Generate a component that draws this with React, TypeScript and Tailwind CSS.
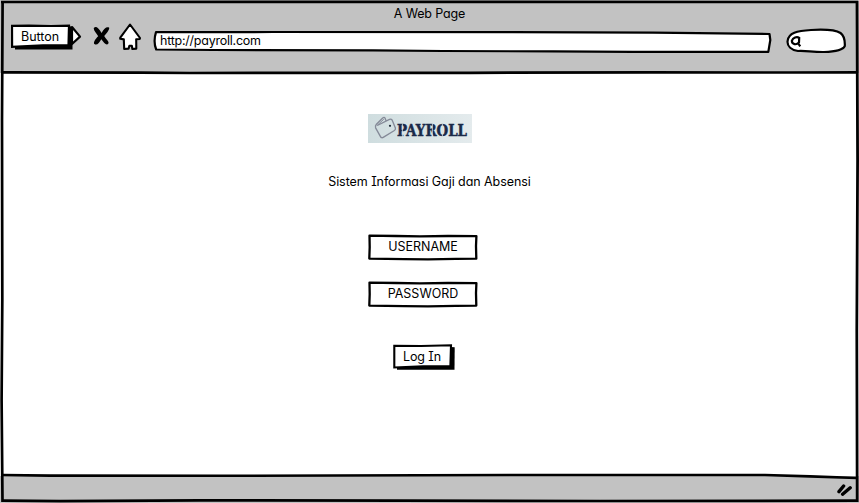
import type { ReactNode } from "react";

const hand =
  "font-[Inter,'Liberation_Sans',sans-serif] [font-feature-settings:'cv11','cv08'] text-[12.5px] font-[425] leading-[18px] text-black whitespace-nowrap";

function Label({ children, className = "" }: { children: ReactNode; className?: string }) {
  return <span className={`relative ${hand} ${className}`}>{children}</span>;
}

/** Uneven pen outline around the browser window and its two rules. */
function WindowInk() {
  return (
    <svg className="pointer-events-none absolute inset-0" width="859" height="503" fill="none" stroke="#000">
      <path d="M1 2 L430 1.9 L858 2" strokeWidth="2.7" />
      <path d="M2.6 1 L2 120 L2.3 300 L1.6 400 L2.5 502" strokeWidth="2.7" />
      <path d="M857 1 L857.6 160 L856.8 330 L857.2 502" strokeWidth="2.8" />
      <path d="M2 72.4 L140 72.6 L190 73 L470 72.8 L650 72.4 L790 72.5 L857 72.3" strokeWidth="2.7" />
      <path d="M2 475 L50 475.6 L220 475.8 L420 475.2 L560 475 L765 475 L810 476.4 L857 478" strokeWidth="2.6" />
      <path d="M2 500.6 L60 501.2 L200 500.3 L400 500.7 L600 501 L857 500.7" strokeWidth="2.7" />
    </svg>
  );
}

function BackForward() {
  return (
    <div className="relative flex h-[26px] w-[72px]">
      <svg className="absolute inset-0" width="72" height="27" viewBox="0 0 72 27">
        <path d="M61 3 L69 12.6 L61 20 Z" fill="#fff" stroke="#000" strokeWidth="2.2" strokeLinejoin="round" />
        <path d="M4 21 L58 1.5 L61.5 3.4 L61.5 25.5 L4 25.5Z" fill="#000" />
        <path d="M1 1.8 L18 1.6 L40 2 L58 1.6 L57.5 21.4 L32 21.4 L1.1 22.8 Z" fill="#fff" stroke="#000" strokeWidth="2.2" />
      </svg>
      <Label className="ml-[10px] mt-1">Button</Label>
    </div>
  );
}

function CloseIcon() {
  return (
    <svg width="17" height="21" viewBox="0 0 17 21" fill="#000">
      <path d="M.8 2 C2.8 0 5.1 1.2 8.6 7 C11 2 13.8 .4 16 1.5 C17.2 3 13.2 8 11.2 10 C12.8 13 16.2 15.4 15.5 17.2 C13.8 20 11.4 17.6 8.3 13.3 C6.2 17 4 19.8 1.4 18.1 C-.3 16.4 3.4 11.8 5.2 10.2 C3.2 6.8 .4 4.2 .8 2Z" />
    </svg>
  );
}

function HomeIcon() {
  return (
    <svg width="23" height="28" viewBox="0 0 23 28" fill="#fff" stroke="#000" strokeWidth="2.1" strokeLinejoin="round">
      <path d="M11 1.5 L21 15 L20.7 16 L17.2 16.2 L17.3 25.6 L13.4 26 L12.8 22.8 L10.4 22.7 L9.6 25.6 L5.2 26 L4.8 16.4 L1.2 15.8 L1.3 14.6 Z" />
    </svg>
  );
}

function AddressBar() {
  return (
    <div className="relative flex h-6 w-[620px]">
      <svg className="absolute inset-0" width="620" height="24" viewBox="0 0 620 24">
        <path
          d="M3 2.2 L120 2 L360 2.2 L500 2.7 L616.5 4 L617.3 10 L615.3 21.9 L480 21.8 L400 21.4 L290 21 L220 20.4 L60 20 L3.2 19.5 C1 14 1.2 8 3 2.2Z"
          fill="#fff" stroke="#000" strokeWidth="2.2" strokeLinejoin="round"
        />
      </svg>
      <Label className="ml-[7px] mt-[2px] tracking-[-0.24px]">http://payroll.com</Label>
    </div>
  );
}

function SearchBox() {
  return (
    <svg width="61" height="26" viewBox="0 0 61 26" fill="none" stroke="#000">
      <path d="M1.6 13 C2.4 5 11 2.8 25 2 C37 1.3 50 2.2 54.5 5 C58.5 8 59 14 58.8 18 C57 22 50 23.6 38 24 C27 24.2 19 22.4 12 23 C5 21.8 1 18 1.6 13Z" fill="#fff" strokeWidth="2.2" />
      <path d="M13.2 9.8 C10.8 8 7 9.6 5.8 12.8 C6 16.6 10.4 17.4 13 14.4 Z M12 15 L14.2 18.4" strokeWidth="2.2" />
    </svg>
  );
}

function Logo() {
  return (
    <div className="h-[29px] w-[104px] bg-linear-to-r from-[#cfdddf] to-[#e4ebed]">
      <svg className="overflow-visible" width="104" height="29" viewBox="0 0 104 29">
        <g fill="none" stroke="#858a98" strokeWidth="1.35" strokeLinejoin="round">
          <path d="M9.2 11.5 L21.5 5.3 Q23.2 4.7 24.2 6.2 L27.4 14 Q27.8 15.5 26.4 16.5 L15.2 23.4 Q13.5 24.4 12.5 22.6 L7.6 13.8 Q7 11.8 8.4 10.2 L14.7 4 Q16.2 2.8 17 4 L18 6.8" />
          <path d="M9.5 11 L15.8 5.2" strokeWidth="1" />
        </g>
        <circle cx="22" cy="11.8" r="1.1" fill="#1f2937" />
        <text
          x="29" y="22" textLength="70" lengthAdjust="spacingAndGlyphs" fill="#1b2a49" stroke="#1b2a49"
          className="stroke-[0.5px] text-[16px] font-bold font-['DejaVu_Serif',serif]"
        >
          PAYROLL
        </text>
        <path d="M34.4 9.5V23 M64.4 9.5V23 M74.4 9.5V23" stroke="#d8e3e5" strokeWidth=".8" />
      </svg>
    </div>
  );
}

function Field({ children, className }: { children: ReactNode; className: string }) {
  return (
    <div className={`relative flex h-[27px] w-[110px] justify-center ${className}`}>
      <svg className="absolute inset-0" width="110" height="27" viewBox="0 0 110 27">
        <path
          d="M1.5 1.6 L28 2 L52 2.3 L80 2 L108.4 2.2 L108 12 L108.3 24.6 L88 24.9 L60 25.3 L36 25.2 L1.3 24.6 L1.7 13Z"
          fill="#fff" stroke="#000" strokeWidth="2.3" strokeLinejoin="round"
        />
      </svg>
      {children}
    </div>
  );
}

function LoginButton() {
  return (
    <button className="relative ml-[393px] mt-[36px] flex h-[27px] w-[63px]">
      <svg className="absolute inset-0" width="63" height="27" viewBox="0 0 63 27">
        <path d="M4 22 L58 3 L61.7 3.3 L61.5 25.8 L4 25.7Z" fill="#000" />
        <path d="M1.3 1.7 L28 2 L58 1.3 L57.4 22 L30 22.3 L1.3 23.5 Z" fill="#fff" stroke="#000" strokeWidth="2.1" />
      </svg>
      <Label className="ml-[10px] mt-[4px] tracking-[-0.1px]">Log In</Label>
    </button>
  );
}

export default function App() {
  return (
    <div className="relative flex h-[503px] w-[859px] flex-col overflow-hidden bg-white">
      <header className="h-[73px] shrink-0 bg-[#c2c2c2]">
        <h1 className="flex h-[23px] justify-center pt-[5px]">
          <Label className="tracking-[-0.15px]">A Web Page</Label>
        </h1>
        <nav className="flex items-start">
          <div className="ml-[11px] mt-[1px]"><BackForward /></div>
          <div className="ml-[10px] mt-[3px]"><CloseIcon /></div>
          <div className="ml-[9px]"><HomeIcon /></div>
          <div className="ml-[11px] mt-[7px]"><AddressBar /></div>
          <div className="ml-[13px] mt-[5px]"><SearchBox /></div>
        </nav>
      </header>
      <main className="flex h-[403px] shrink-0 flex-col items-start bg-white">
        <div className="ml-[368px] mt-[41px]"><Logo /></div>
        <p className="mt-[30px] flex w-full justify-center">
          <Label className="tracking-[-0.06px]">Sistem Informasi Gaji dan Absensi</Label>
        </p>
        <Field className="ml-[368px] mt-[43px]">
          <Label className="mt-[4px]">USERNAME</Label>
        </Field>
        <Field className="ml-[368px] mt-[20px]">
          <Label className="mt-[4px]">PASSWORD</Label>
        </Field>
        <LoginButton />
      </main>
      <footer className="flex flex-1 justify-end bg-[#c2c2c2] pr-[4px] pt-[7px]">
        <svg width="18" height="16" viewBox="0 0 18 16" stroke="#000" strokeWidth="3.4" strokeLinecap="round">
          <path d="M2 8.6 L6.6 3 M5.6 11.2 L13.2 4.8" />
        </svg>
      </footer>
      <WindowInk />
    </div>
  );
}
